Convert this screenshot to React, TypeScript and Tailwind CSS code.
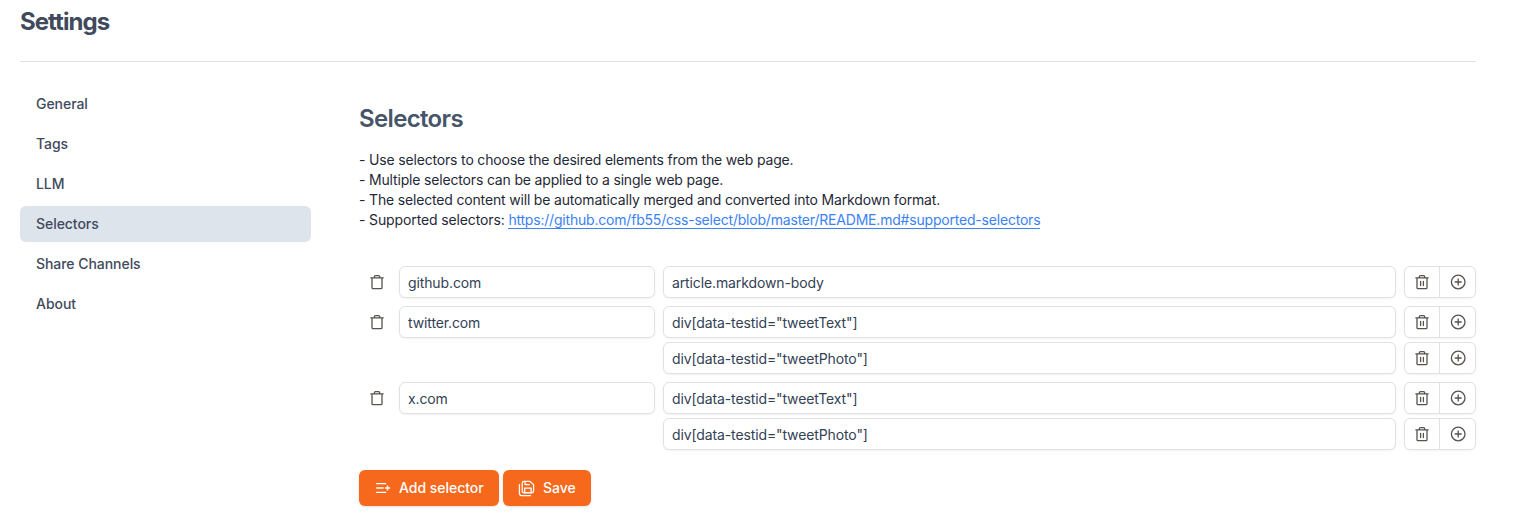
import React from "react";

const nav = ["General", "Tags", "LLM", "Selectors", "Share Channels", "About"];

const sites = [
  { host: "github.com", selectors: ["article.markdown-body"] },
  { host: "twitter.com", selectors: ['div[data-testid="tweetText"]', 'div[data-testid="tweetPhoto"]'] },
  { host: "x.com", selectors: ['div[data-testid="tweetText"]', 'div[data-testid="tweetPhoto"]'] },
];

const field =
  "h-8 rounded-md border border-[#e1e1e3] bg-white px-2 text-sm tracking-[-0.12px] text-[#334155] shadow-xs outline-none";

function Trash({ lined = false }: { lined?: boolean }) {
  return (
    <svg className="size-[18px]" viewBox="0 0 18 18" fill="none" stroke="currentColor" strokeWidth="1.3" strokeLinecap="round" strokeLinejoin="round">
      <path d="M2.8 4.8h12.4M4 4.8v9.9a1 1 0 0 0 1 1h8a1 1 0 0 0 1-1V4.8M6.3 4.6V3.9a1.2 1.2 0 0 1 1.2-1.2h3a1.2 1.2 0 0 1 1.2 1.2v.7" />
      {lined && <path d="M7.6 8.3v4.2M10.4 8.3v4.2" />}
    </svg>
  );
}

function PlusCircle() {
  return (
    <svg className="size-[18px]" viewBox="0 0 18 18" fill="none" stroke="currentColor" strokeWidth="1.3" strokeLinecap="round">
      <circle cx="9.2" cy="9" r="6.8" />
      <path d="M6.2 9h6M9.2 6v6" />
    </svg>
  );
}

function ListAdd() {
  return (
    <svg className="size-[18px]" viewBox="0 0 18 18" fill="none" stroke="currentColor" strokeWidth="1.4" strokeLinecap="round">
      <path d="M2.6 4.6h9M2.6 9h6.6M2.6 13.4h9M11.4 9h4.2M13.5 6.9v4.2" />
    </svg>
  );
}

function SaveAll() {
  return (
    <svg className="size-[17px]" viewBox="0 0 24 24" fill="none" stroke="currentColor" strokeWidth="1.8" strokeLinecap="round" strokeLinejoin="round">
      <path d="M6 4.500A2.500 2.500 0 0 1 8.500 2h8.500L22 6.500V15.500a2.500 2.500 0 0 1-2.500 2.500h-11A2.500 2.500 0 0 1 6 15.500Z" />
      <path d="M10 2v4.500h6" />
      <path d="M18.500 18v-6.500h-9V18" />
      <path d="M17.500 22H5a3 3 0 0 1-3-3V6.500" />
    </svg>
  );
}

function SelectorRow({ value }: { value: string }) {
  return (
    <div className="flex gap-2">
      <input className={`${field} min-w-0 flex-1`} defaultValue={value} />
      <div className="flex h-8 w-[72px] rounded-md border border-[#e1e1e3] text-[#57534e] shadow-xs">
        <button className="flex w-[35px] items-center justify-center border-r border-[#e1e1e3]">
          <Trash lined />
        </button>
        <button className="flex flex-1 items-center justify-center">
          <PlusCircle />
        </button>
      </div>
    </div>
  );
}

export default function App() {
  return (
    <div className="h-[530px] w-[1527px] overflow-hidden bg-white pl-5 font-['Inter',sans-serif] text-sm">
      <div className="w-[1456px]">
        <header className="h-[62px] border-b border-[#e1e1e3] pt-1.5">
          <h1 className="text-2xl leading-8 font-bold tracking-[-0.96px] text-[#3f4a5c]">Settings</h1>
        </header>
        <div className="flex gap-12 pt-6">
          <nav className="flex w-[291px] flex-col gap-1">
            {nav.map((item) => (
              <a
                key={item}
                className={`flex h-9 items-center rounded-md px-4 font-[460] tracking-[-0.05px] text-[#3f4a5c] ${
                  item === "Selectors" ? "bg-[#dee4ec]" : ""
                }`}
              >
                {item}
              </a>
            ))}
          </nav>
          <main className="min-w-0 flex-1 pt-[17px]">
            <h2 className="text-2xl leading-8 font-[570] tracking-[-0.65px] text-[#475569]">Selectors</h2>
            <div className="mt-[15px] leading-5 tracking-[-0.17px] text-[#1f2937]">
              <p>- Use selectors to choose the desired elements from the web page.</p>
              <p>- Multiple selectors can be applied to a single web page.</p>
              <p>- The selected content will be automatically merged and converted into Markdown format.</p>
              <p className="tracking-[-0.13px]">
                - Supported selectors:{" "}
                <a className="border-b border-[#3b82f6] tracking-[-0.2px] text-[#3b82f6]">
                  https://github.com/fb55/css-select/blob/master/README.md#supported-selectors
                </a>
              </p>
            </div>
            <div className="mt-9 flex flex-col gap-2">
              {sites.map((site) => (
                <div key={site.host} className="flex items-start">
                  <button className="mr-1 flex h-8 w-9 items-center justify-center text-[#57534e]">
                    <Trash />
                  </button>
                  <input className={`${field} mr-2 w-64`} defaultValue={site.host} />
                  <div className="flex min-w-0 flex-1 flex-col gap-1">
                    {site.selectors.map((s) => (
                      <SelectorRow key={s} value={s} />
                    ))}
                  </div>
                </div>
              ))}
            </div>
            <div className="mt-5 flex gap-1 font-[460] tracking-[-0.03px] text-white">
              <button className="flex h-9 w-[140px] items-center gap-[7px] rounded-md bg-[#f6691c] pl-[15px] shadow-sm">
                <ListAdd />
                Add selector
              </button>
              <button className="flex h-9 w-[88px] items-center gap-2 rounded-md bg-[#f6691c] pl-[15px] shadow-sm">
                <SaveAll />
                Save
              </button>
            </div>
          </main>
        </div>
      </div>
    </div>
  );
}
